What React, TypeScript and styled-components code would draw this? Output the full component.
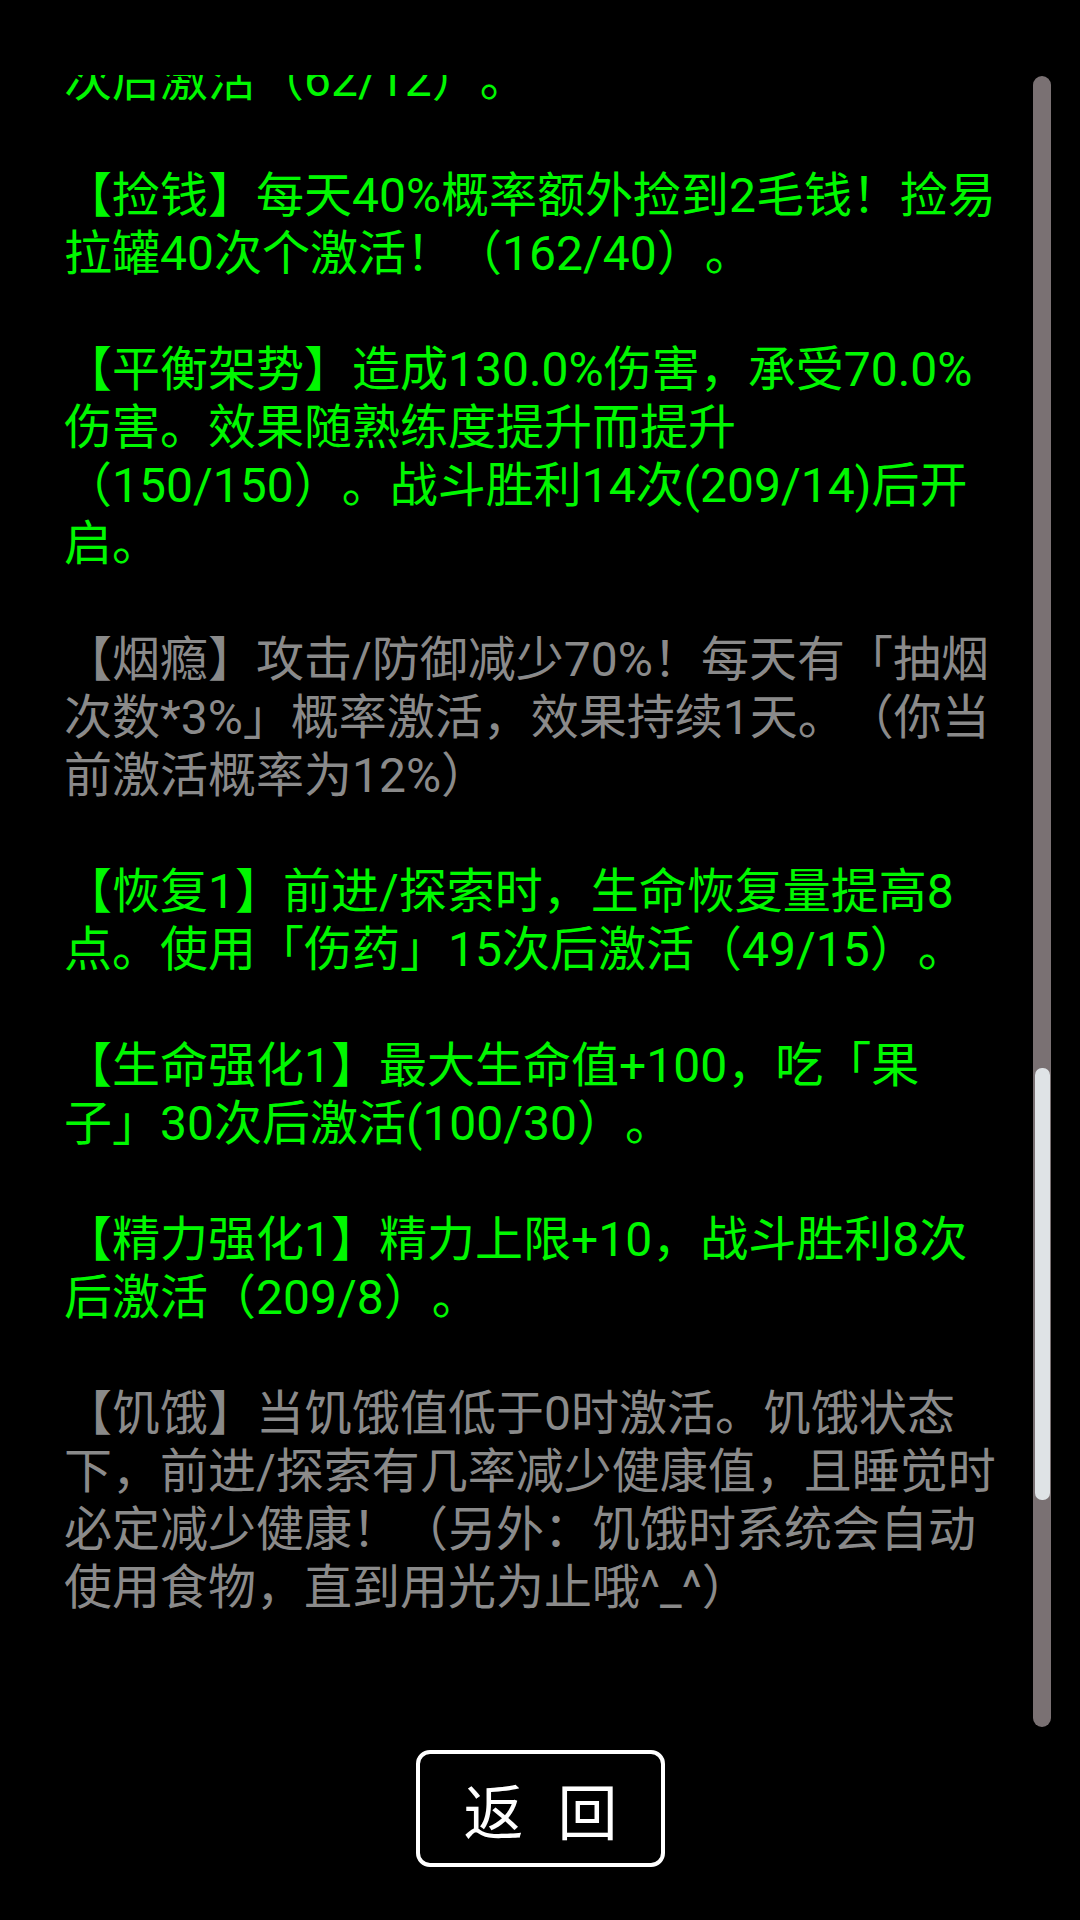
import React, { useLayoutEffect, useRef } from "react";
import styled, { createGlobalStyle } from "styled-components";

const GlobalStyle = createGlobalStyle`
  html, body {
    margin: 0;
    padding: 0;
    background: #000;
  }
  body {
    font-family: Roboto, "Noto Sans CJK SC", sans-serif;
    text-spacing-trim: space-all;
  }
`;

const Page = styled.div`
  width: 1080px;
  height: 1920px;
  background: #000;
  display: flex;
  flex-direction: column;
  overflow: hidden;
`;

const ContentRow = styled.div`
  display: flex;
  margin-top: 75px;
  height: 1652px;
  padding: 0 29px 0 64px;
  gap: 23px;
`;

const Viewport = styled.div`
  flex: 1;
  min-width: 0;
  overflow-y: scroll;
  scrollbar-width: none;
  &::-webkit-scrollbar {
    display: none;
  }
`;

const Paragraph = styled.p<{ $tone: "green" | "gray" }>`
  margin: 0 0 58px 0;
  font-family: Roboto, "Noto Sans CJK SC", sans-serif;
  font-size: 48px;
  line-height: 58px;
  font-weight: 400;
  text-spacing-trim: space-all;
  color: ${(p) => (p.$tone === "green" ? "#00f800" : "#8a8a8a")};
`;

const Line = styled.span`
  display: block;
  white-space: nowrap;
`;

const Track = styled.div`
  width: 18px;
  flex: none;
  margin-top: 1px;
  background: #7a7173;
  border-radius: 9px;
  display: flex;
  flex-direction: column;
  align-items: center;
`;

const Thumb = styled.div`
  width: 15px;
  background: #dfe3e6;
  border-radius: 7px;
`;

const ButtonRow = styled.div`
  display: flex;
  justify-content: center;
  margin-top: 23px;
`;

const BackButton = styled.button`
  box-sizing: border-box;
  width: 249px;
  height: 117px;
  margin-left: 1px;
  border: 4px solid #fff;
  border-radius: 14px;
  background: #000;
  color: #fff;
  font-family: "Noto Sans CJK SC", sans-serif;
  font-size: 60px;
  font-weight: 400;
  display: flex;
  align-items: center;
  justify-content: center;
  gap: 34px;
  padding: 0;
  cursor: pointer;
`;

type Tone = "green" | "gray";
const paragraphs: { tone: Tone; lines: string[] }[] = [
  { tone: "green", lines: ["次后激活（62/12）。"] },
  {
    tone: "green",
    lines: ["【捡钱】每天40%概率额外捡到2毛钱！捡易", "拉罐40次个激活！（162/40）。"],
  },
  {
    tone: "green",
    lines: [
      "【平衡架势】造成130.0%伤害，承受70.0%",
      "伤害。效果随熟练度提升而提升",
      "（150/150）。战斗胜利14次(209/14)后开",
      "启。",
    ],
  },
  {
    tone: "gray",
    lines: [
      "【烟瘾】攻击/防御减少70%！每天有「抽烟",
      "次数*3%」概率激活，效果持续1天。（你当",
      "前激活概率为12%）",
    ],
  },
  {
    tone: "green",
    lines: ["【恢复1】前进/探索时，生命恢复量提高8", "点。使用「伤药」15次后激活（49/15）。"],
  },
  {
    tone: "green",
    lines: ["【生命强化1】最大生命值+100，吃「果", "子」30次后激活(100/30）。"],
  },
  {
    tone: "green",
    lines: ["【精力强化1】精力上限+10，战斗胜利8次", "后激活（209/8）。"],
  },
  {
    tone: "gray",
    lines: [
      "【饥饿】当饥饿值低于0时激活。饥饿状态",
      "下，前进/探索有几率减少健康值，且睡觉时",
      "必定减少健康！（另外：饥饿时系统会自动",
      "使用食物，直到用光为止哦^_^）",
    ],
  },
];

const TRACK_HEIGHT = 1651;
const THUMB_TOP = 992;
const THUMB_HEIGHT = 432;

export default function App() {
  const viewRef = useRef<HTMLDivElement>(null);
  useLayoutEffect(() => {
    if (viewRef.current) viewRef.current.scrollTop = 24;
  }, []);

  return (
    <>
      <GlobalStyle />
      <Page>
        <ContentRow>
          <Viewport ref={viewRef}>
            {paragraphs.map((p, i) => (
              <Paragraph key={i} $tone={p.tone}>
                {p.lines.map((l, j) => (
                  <Line key={j}>{l}</Line>
                ))}
              </Paragraph>
            ))}
            <div style={{ height: 400 }} />
          </Viewport>
          <Track style={{ height: TRACK_HEIGHT }}>
            <Thumb style={{ marginTop: THUMB_TOP, height: THUMB_HEIGHT }} />
          </Track>
        </ContentRow>
        <ButtonRow>
          <BackButton>
            <span>返</span>
            <span>回</span>
          </BackButton>
        </ButtonRow>
      </Page>
    </>
  );
}
